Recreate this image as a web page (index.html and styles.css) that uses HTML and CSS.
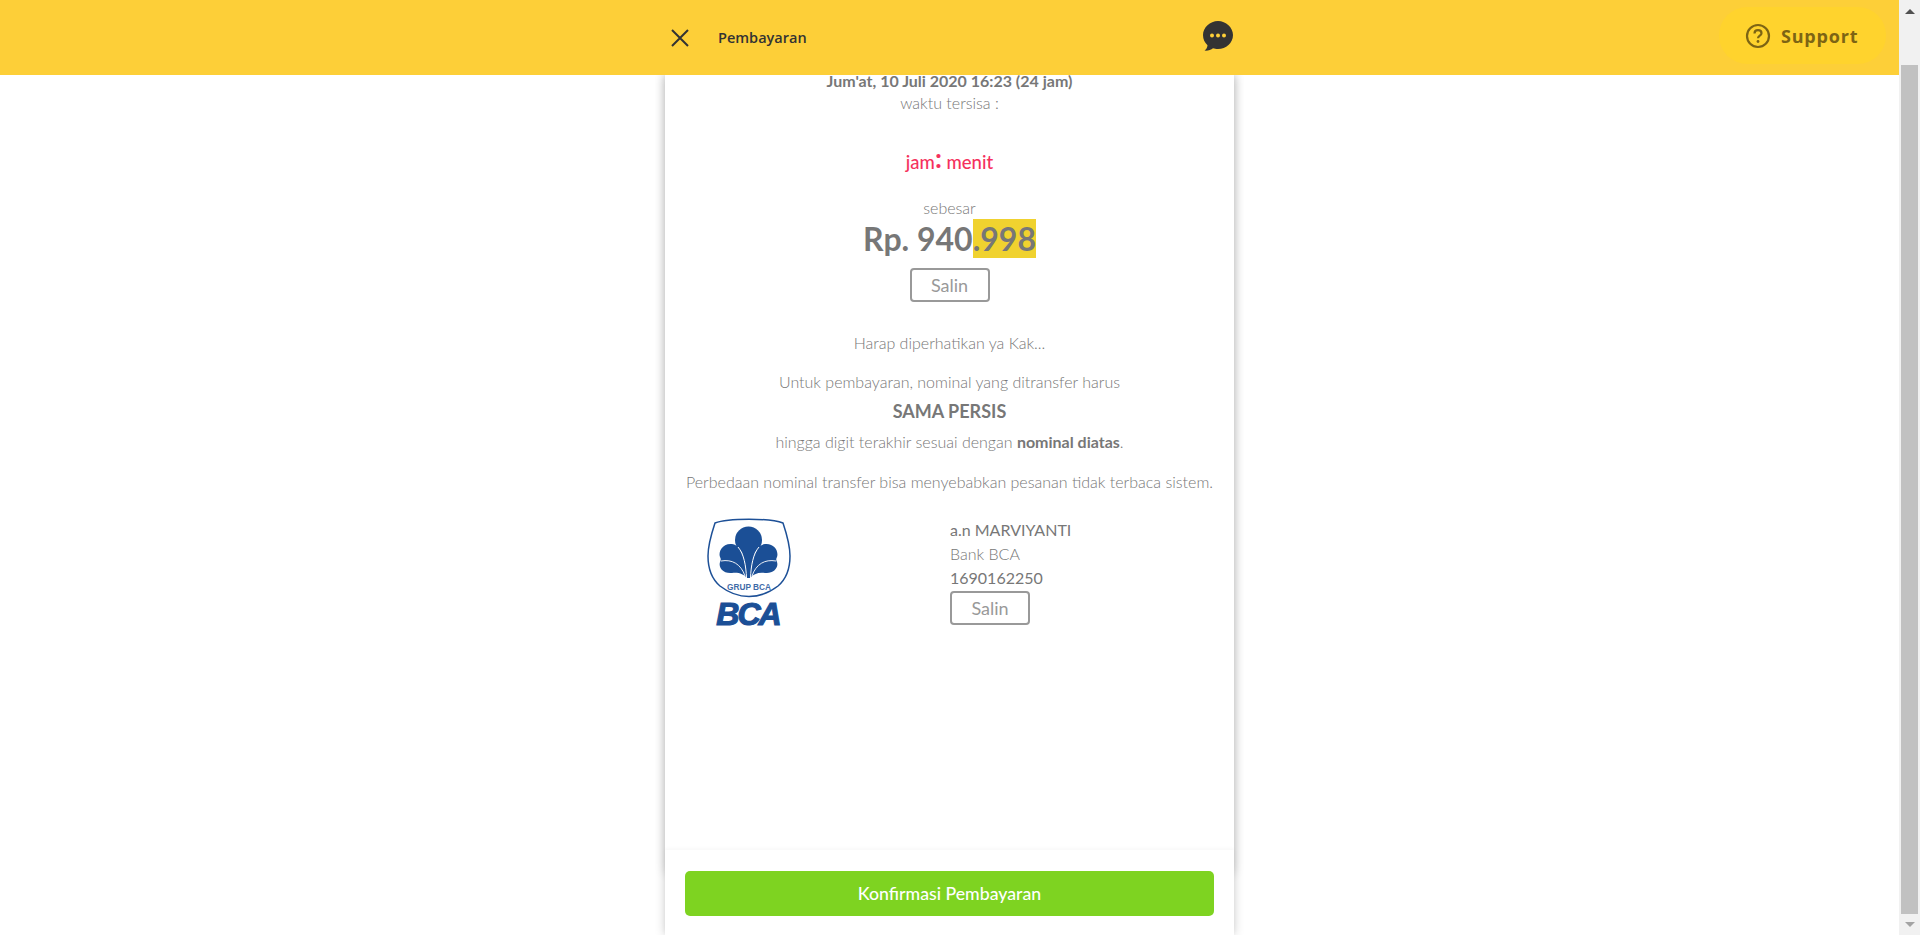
FILE: index.html
```html
<!DOCTYPE html>
<html lang="en">
<head>
    <meta charset="UTF-8">
    <meta name="viewport" content="width=device-width, initial-scale=1.0">
    <title>Pembayaran</title>
    <link rel="stylesheet" href="styles.css">
</head>
<body>

<div class="page">
    <div class="banner">
        <div class="banner-side"></div>
        <div class="banner-center">
            <svg class="icon-close" width="20" height="20" viewBox="0 0 20 20">
                <path d="M2 2 L18 18 M18 2 L2 18" stroke="#333" stroke-width="2" fill="none"/>
            </svg>
            <span class="banner-title">Pembayaran</span>
            <svg class="icon-chat" width="32" height="32" viewBox="0 0 32 32">
                <path d="M16 1 C24 1 31 7.500 31 15 C31 23 24 29 16 29 C14 29 12.500 28.700 11 28.200 C9 30 5.500 31 2.500 30.600 C4.500 29 5.300 27.500 5.500 25.200 C2.700 22.700 1 19 1 15 C1 7.500 8 1 16 1 Z" fill="#333"/>
                <circle cx="10" cy="15.500" r="2" fill="#fdcf38"/>
                <circle cx="16" cy="15.500" r="2" fill="#fdcf38"/>
                <circle cx="22" cy="15.500" r="2" fill="#fdcf38"/>
            </svg>
        </div>
        <div class="banner-side banner-right">
            <a class="support" href="#">
                <svg width="26" height="26" viewBox="0 0 26 26">
                    <circle cx="13" cy="13" r="11" stroke="#7d6414" stroke-width="2.200" fill="none"/>
                    <path d="M9.500 10.500 C9.500 8.300 11 7.200 13 7.200 C15 7.200 16.500 8.400 16.500 10.200 C16.500 12.600 13 12.700 13 15.200" stroke="#7d6414" stroke-width="2.200" fill="none"/>
                    <circle cx="13" cy="18.500" r="1.400" fill="#7d6414"/>
                </svg>
                <span>Support</span>
            </a>
        </div>
    </div>

    <div class="card">
        <div class="card-body">
            <div class="due-date">Jum'at, 10 Juli 2020 16:23 (24 jam)</div>
            <div class="light-text due-label">waktu tersisa :</div>
            <div class="timer">jam<span class="timer-dot">:</span> menit</div>

            <div class="light-text amount-label">sebesar</div>
            <div class="amount">Rp. 940<span class="amount-mark">.998</span></div>
            <button class="btn-copy">Salin</button>

            <p class="light-text note-head">Harap diperhatikan ya Kak...</p>
            <p class="light-text note-one">Untuk pembayaran, nominal yang ditransfer harus</p>
            <p class="note-strong">SAMA PERSIS</p>
            <p class="light-text note-two">hingga digit terakhir sesuai dengan <b>nominal diatas</b>.</p>
            <p class="light-text note-three">Perbedaan nominal transfer bisa menyebabkan pesanan tidak terbaca sistem.</p>

            <div class="bank-row">
                <svg class="bank-logo" width="84" height="118" viewBox="0 0 84 118">
                    <g transform="translate(1 1)">
                        <path d="M7 5 C20 0 62 0 75 5 C80 20 82 28 82 38 C82 52 77 62 70 68 C52 82 30 82 12 68 C5 62 0 52 0 38 C0 28 2 20 7 5 Z" fill="#fff" stroke="#1d5097" stroke-width="1.500"/>
                        <circle cx="40.500" cy="22" r="13.500" fill="#1b4f96"/>
                        <path d="M33 32 C37 40 37 50 38 60 L43 60 C44 50 44 40 48 32 Z" fill="#1b4f96"/>
                        <path d="M39 60 C39 48 36 28 24 26 C15 25 10 33 12 39 C13 41 13 42 12 44 C10 50 16 56 24 55 C30 54 36 56 39 60 Z" fill="#1b4f96"/>
                        <path d="M42 60 C42 48 45 28 57 26 C66 25 71 33 69 39 C68 41 68 42 69 44 C71 50 65 56 57 55 C51 54 45 56 42 60 Z" fill="#1b4f96"/>
                        <path d="M30 29 C36 36 38 48 38.500 60 M51 29 C45 36 43 48 42.500 60" stroke="#fff" stroke-width="1" fill="none"/>
                        <path d="M13 43 C24 41 33 46 37 58 M68 43 C57 41 48 46 44 58" stroke="#fff" stroke-width="0.900" fill="none"/>
                        <text class="logo-small" x="41" y="72" text-anchor="middle" textLength="44" lengthAdjust="spacingAndGlyphs">GRUP BCA</text>
                        <text class="logo-big" x="40" y="107" text-anchor="middle">BCA</text>
                    </g>
                </svg>
                <div class="bank-info">
                    <div class="bank-name">a.n MARVIYANTI</div>
                    <div class="light-text bank-line">Bank BCA</div>
                    <div class="bank-name">1690162250</div>
                    <button class="btn-copy btn-copy-bank">Salin</button>
                </div>
            </div>
        </div>
        <div class="card-footer">
            <button class="btn-confirm">Konfirmasi Pembayaran</button>
        </div>
    </div>
</div>

<div class="scrollbar">
    <div class="scroll-arrow scroll-up"></div>
    <div class="scroll-track"><div class="scroll-thumb"></div></div>
    <div class="scroll-arrow scroll-down"></div>
</div>

</body>
</html>
```

FILE: styles.css
```css
html, body {
    margin: 0;
    padding: 0;
    height: 935px;
    overflow: hidden;
    background-color: #ffffff;
}

body {
    display: flex;
    font-family: "Lato", "Liberation Sans", sans-serif;
    color: #777777;
    font-size: 16px;
}

.page {
    flex: 1;
    height: 935px;
    display: flex;
    flex-direction: column;
    align-items: center;
}

/* header */
.banner {
    position: relative;
    z-index: 10;
    width: 100%;
    height: 75px;
    flex: none;
    background-color: #fdcf38;
    display: flex;
    align-items: center;
}

.banner-side {
    flex: 1;
}

.banner-right {
    display: flex;
    justify-content: flex-end;
}

.banner-center {
    width: 569px;
    display: flex;
    align-items: center;
}

.icon-close {
    margin-left: 5px;
    margin-right: 28px;
}

.banner-title {
    font-family: "Open Sans", sans-serif;
    font-weight: 600;
    font-size: 14.500px;
    color: #333333;
    flex: 1;
}

.icon-chat {
    margin-top: -3px;
}

.support {
    width: 167px;
    height: 57px;
    box-sizing: border-box;
    margin-right: 13px;
    margin-bottom: 4px;
    padding-left: 26px;
    border-radius: 29px;
    background-color: #ffd32d;
    display: flex;
    align-items: center;
    gap: 10px;
    text-decoration: none;
    color: #7d6414;
    font-family: "Open Sans", sans-serif;
    font-weight: 700;
    font-size: 18px;
    letter-spacing: 0.8px;
}

/* card */
.card {
    width: 569px;
    flex: 1;
    display: flex;
    flex-direction: column;
    background-color: #fff;
    box-shadow: 0 0 10px rgba(0, 0, 0, 0.2);
}

.card-body {
    margin-top: -4px;
    height: 799px;
    flex: none;
    text-align: center;
    box-shadow: 0 3px 10px rgba(0, 0, 0, 0.16);
}

.light-text {
    font-weight: 300;
    color: #777777;
}

.due-date {
    font-weight: 700;
    font-size: 16px;
    line-height: 20px;
    color: #777777;
}

.due-label {
    margin-top: 2px;
    line-height: 20px;
}

.timer {
    margin-top: 37px;
    line-height: 24px;
    font-size: 18.500px;
    font-weight: 500;
    color: #f5315d;
}

.timer-dot {
    font-size: 27px;
    font-weight: 700;
    line-height: 16px;
    vertical-align: 1px;
}

.amount-label {
    margin-top: 24px;
    line-height: 20px;
}

.amount {
    margin-top: 1px;
    font-size: 32px;
    font-weight: 700;
    line-height: 39px;
}

.amount-mark {
    display: inline-block;
    background-color: #f0d22f;
}

.btn-copy {
    display: block;
    margin: 10px auto 0;
    width: 80px;
    height: 34px;
    background: #fff;
    border: 2px solid #999999;
    border-radius: 4px;
    font-family: inherit;
    font-size: 18px;
    font-weight: 400;
    color: #999999;
    padding: 0;
}

p {
    margin: 0;
    line-height: 20px;
}

.note-head {
    margin-top: 31px;
}

.note-one {
    margin-top: 19px;
}

.note-strong {
    margin-top: 8px;
    font-size: 18px;
    line-height: 22px;
    font-weight: 700;
}

.note-two {
    margin-top: 10px;
}

.note-two b {
    font-weight: 700;
}

.note-three {
    margin-top: 20px;
}

/* bank */
.bank-row {
    margin-top: 25px;
    padding-left: 42px;
    display: flex;
    text-align: left;
}

.bank-logo {
    flex: none;
}

.bank-info {
    margin-left: 159px;
    padding-top: 1px;
    line-height: 24px;
}

.btn-copy-bank {
    margin: 1px 0 0;
}

.logo-small {
    font-family: "Liberation Sans", sans-serif;
    font-size: 9px;
    font-weight: 700;
    fill: #3f6ba8;
}

.logo-big {
    font-family: "Liberation Sans", sans-serif;
    font-size: 32px;
    font-weight: 700;
    font-style: italic;
    letter-spacing: -2px;
    stroke: #1b4f96;
    stroke-width: 1.200px;
    fill: #1b4f96;
}

/* footer */
.card-footer {
    position: relative;
    margin-top: -20px;
    flex: 1;
    background-color: #fff;
    padding: 21px 20px 0 20px;
    box-shadow: 0 -1px 4px rgba(0, 0, 0, 0.04);
}

.btn-confirm {
    display: block;
    width: 100%;
    height: 45px;
    background-color: #7ed321;
    border: none;
    border-radius: 5px;
    color: #ffffff;
    font-family: inherit;
    font-size: 17.700px;
    font-weight: 500;
}

/* scrollbar */
.scrollbar {
    width: 21px;
    height: 935px;
    flex: none;
    background-color: #f1f1f1;
    display: flex;
    flex-direction: column;
    z-index: 20;
}

.scroll-arrow {
    height: 21px;
    flex: none;
    position: relative;
}

.scroll-up::after,
.scroll-down::after {
    content: "";
    position: absolute;
    left: 6px;
    width: 0;
    height: 0;
    border-left: 5px solid transparent;
    border-right: 5px solid transparent;
}

.scroll-up::after {
    top: 9px;
    border-bottom: 5px solid #505050;
}

.scroll-down::after {
    top: 8px;
    border-top: 5px solid #a3a3a3;
}

.scroll-track {
    flex: 1;
    padding: 44px 2px 0;
}

.scroll-thumb {
    height: 849px;
    background-color: #c1c1c1;
}
```
